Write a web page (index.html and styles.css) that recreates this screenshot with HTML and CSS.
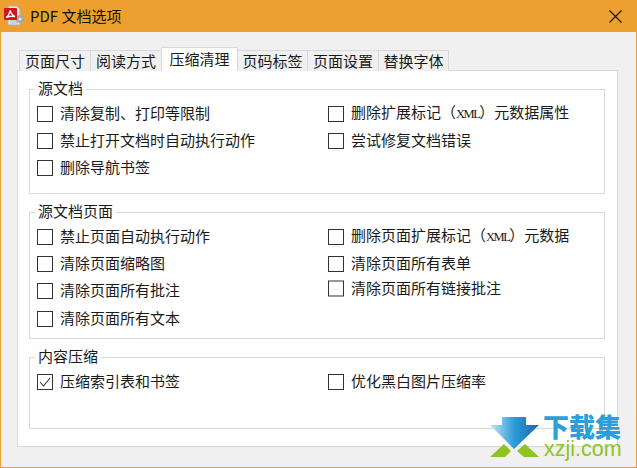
FILE: index.html
```html
<!DOCTYPE html>
<html lang="zh">
<head>
<meta charset="utf-8">
<title>PDF 文档选项</title>
<link rel="stylesheet" href="styles.css">
</head>
<body>
<div class="window">
  <header class="titlebar">
    <svg class="app-icon" width="24" height="24" viewBox="0 0 24 24">
      <path d="M4 2h9l3 3v16H4z" fill="#e6e8ec" stroke="#aab0b8"/>
      <path d="M6 17h8M6 19h8" stroke="#b5bac2"/>
      <circle cx="16" cy="15" r="4" fill="#a3a9b3"/>
      <circle cx="16" cy="15" r="1.500" fill="#e6e8ec"/>
      <rect x="0" y="4" width="13" height="12" rx="1" fill="#d3151b"/>
      <path d="M2 13.500c2.500-1 3.500-4.500 4.200-7 .6 2.800 2 4.800 4.800 6-3-.6-6-.2-9 1z" fill="none" stroke="#fff" stroke-width="1.300"/>
    </svg>
    <span class="title">PDF 文档选项</span>
    <svg class="close" width="13" height="13" viewBox="0 0 13 13"><path d="M.5.500l12 12M12.500.500l-12 12" stroke="#111" stroke-width="1.100" fill="none"/></svg>
  </header>
  <main class="body">
    <nav class="tabs">
      <span class="tab w72">页面尺寸</span>
      <span class="tab w72">阅读方式</span>
      <span class="tab active">压缩清理</span>
      <span class="tab w71">页码标签</span>
      <span class="tab w72">页面设置</span>
      <span class="tab w71">替换字体</span>
    </nav>
    <section class="panel">
      <fieldset class="group g1">
        <legend>源文档</legend>
        <div class="rows">
          <label class="row"><i class="box"></i>清除复制、打印等限制</label>
          <label class="row"><i class="box"></i><span>删除扩展标记（<span class="latin">XML</span>）元数据属性</span></label>
          <label class="row"><i class="box"></i>禁止打开文档时自动执行动作</label>
          <label class="row"><i class="box"></i>尝试修复文档错误</label>
          <label class="row"><i class="box"></i>删除导航书签</label>
        </div>
      </fieldset>
      <fieldset class="group g2">
        <legend>源文档页面</legend>
        <div class="rows">
          <label class="row"><i class="box"></i>禁止页面自动执行动作</label>
          <label class="row"><i class="box"></i><span>删除页面扩展标记（<span class="latin">XML</span>）元数据</span></label>
          <label class="row"><i class="box"></i>清除页面缩略图</label>
          <label class="row"><i class="box"></i>清除页面所有表单</label>
          <label class="row"><i class="box"></i>清除页面所有批注</label>
          <label class="row raised"><i class="box"></i>清除页面所有链接批注</label>
          <label class="row"><i class="box"></i>清除页面所有文本</label>
        </div>
      </fieldset>
      <fieldset class="group g3">
        <legend>内容压缩</legend>
        <div class="rows">
          <label class="row"><i class="box"><svg width="14" height="14" viewBox="0 0 14 14"><path d="M2 7l3.500 4L12 3" fill="none" stroke="#333" stroke-width="1.100"/></svg></i>压缩索引表和书签</label>
          <label class="row"><i class="box"></i>优化黑白图片压缩率</label>
        </div>
      </fieldset>
    </section>
  </main>
  <div class="watermark">
    <svg width="54" height="44" viewBox="0 0 54 44">
      <defs><linearGradient id="arrow" x1="0" x2="1" y1="0" y2="0"><stop offset="0" stop-color="#c4e5f5"/><stop offset=".5" stop-color="#2a9bd8"/><stop offset="1" stop-color="#1f64ae"/></linearGradient></defs>
      <path d="M14 1h24v8h13L26 33 2 9h12z" fill="url(#arrow)"/>
      <path d="M16 28l7 7-6 6H2zM37 28l14 13H36l-7-6z" fill="#8fc31f"/>
    </svg>
    <div class="wm-text">
      <span class="wm-cn">下载集</span>
      <span class="wm-en">xzji.com</span>
    </div>
  </div>
</div>
</body>
</html>
```
FILE: styles.css
```css
* { box-sizing: border-box; }
html, body { margin: 0; padding: 0; }
body { width: 637px; height: 468px; overflow: hidden; font-family: "Noto Sans CJK SC", "Liberation Sans", sans-serif; font-size: 15px; color: #1a1a1a; }
.window { position: relative; width: 637px; height: 468px; display: flex; flex-direction: column; background: #ed9f2f; padding: 0 1px 1px; }
.titlebar { height: 32px; flex: none; display: flex; align-items: center; padding-left: 3px; }
.app-icon { flex: none; }
.title { margin-left: 2px; font-size: 15px; color: #111; line-height: 32px; }
.close { margin-left: auto; margin-right: 14px; }
.body { flex: 1; background: #f0f0f0; padding: 15px 18px 20px 16px; display: flex; flex-direction: column; }
.tabs { display: flex; height: 24px; padding-left: 2px; align-items: flex-end; position: relative; z-index: 1; margin-bottom: -1px; }
.tab { height: 21px; border: 1px solid #d9d9d9; border-bottom: none; margin-right: -1px; background: #f0f0f0; text-align: center; font-size: 15px; line-height: 20px; white-space: nowrap; }
.w72 { width: 72px; }
.w71 { width: 71px; }
.tab.active { height: 24px; width: 77px; background: #fff; line-height: 22px; position: relative; z-index: 2; }
.panel { flex: 1; background: #fff; border: 1px solid #d9d9d9; padding: 8px 12px 0 11px; display: flex; flex-direction: column; gap: 8px; }
.group { margin: 0; padding: 0 0 0 7px; border: 1px solid #d9d9d9; min-width: 0; }
.group legend { margin-left: -2px; padding: 0 3px; font-size: 15px; line-height: 18px; height: 20px; }
.g1 { height: 115px; }
.g2 { height: 137px; }
.g3 { height: 82px; }
.rows { display: grid; grid-template-columns: 291px 1fr; grid-auto-rows: 27.400px; }
.row { display: flex; align-items: center; gap: 7px; line-height: 20px; white-space: nowrap; }
.raised { transform: translateY(-2.500px); }
.latin { font-family: "Liberation Serif", serif; font-size: 12.500px; letter-spacing: -1.500px; }
.box { flex: none; width: 16px; height: 16px; margin-top: 2px; border: 1px solid #333; background: #fff; display: flex; align-items: center; justify-content: center; font-style: normal; }
.watermark { position: absolute; left: 488px; top: 416px; display: flex; gap: 3px; }
.wm-text { display: flex; flex-direction: column; align-items: flex-start; margin-top: -2px; margin-left: -2px; }
.wm-cn { font-size: 26px; line-height: 24px; height: 24px; font-weight: 900; color: #2a9fdc; }
.wm-en { font-family: "Liberation Sans", sans-serif; font-size: 21.500px; line-height: 22px; margin-left: 1px; color: #8fc31f; }
```
